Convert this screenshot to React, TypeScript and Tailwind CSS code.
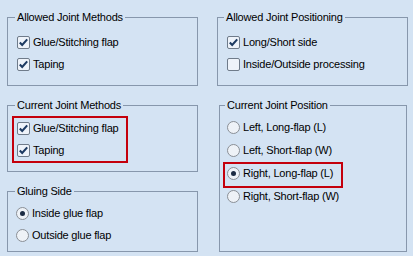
import React from "react";

type GroupProps = {
  title: string;
  className?: string;
  bodyClass?: string;
  legendClass?: string;
  children: React.ReactNode;
};

const GroupBox = ({ title, className = "", bodyClass = "", legendClass = "ml-[7px]", children }: GroupProps) => {
  return (
    <fieldset className={`border border-[#8797ac] ${className}`}>
      <legend className={`px-[2px] leading-[14px] ${legendClass}`}>{title}</legend>
      <div className={bodyClass}>{children}</div>
    </fieldset>
  );
};

const CheckBox = ({ checked }: { checked: boolean }) => {
  return (
    <span className="flex h-[13px] w-[13px] shrink-0 items-center justify-center rounded-[2px] border border-[#6f7b8a] bg-[#eef3fa]">
      {checked && (
        <svg width="11" height="11" viewBox="0 0 11 11">
          <path d="M1.8 5.4 L4.2 7.9 L9.2 2.4" fill="none" stroke="#1d3a62" strokeWidth="2.1" />
        </svg>
      )}
    </span>
  );
};

const Radio = ({ checked }: { checked: boolean }) => {
  return (
    <span className="flex h-[13px] w-[13px] shrink-0 items-center justify-center rounded-full border border-[#8a8f96] bg-[#eef2f7]">
      {checked && <span className="h-[5px] w-[5px] rounded-full bg-[#1c2c44]" />}
    </span>
  );
};

const CheckRow = ({ label, checked = true, h = "h-[22px]" }: { label: string; checked?: boolean; h?: string }) => {
  return (
    <div className={`flex items-center gap-[3px] ${h}`}>
      <CheckBox checked={checked} />
      <span>{label}</span>
    </div>
  );
};

const RadioRow = ({ label, checked = false, h = "h-[22px]" }: { label: string; checked?: boolean; h?: string }) => {
  return (
    <div className={`flex items-center gap-[3px] ${h}`}>
      <Radio checked={checked} />
      <span>{label}</span>
    </div>
  );
};

export default function App() {
  return (
    <div
      className="flex h-[256px] w-[413px] gap-[19px] bg-[#d4e3f3] pl-[7px] pt-[10px] text-[11px] tracking-[-0.2px] text-black"
      style={{ fontFamily: '"Liberation Sans", Arial, sans-serif' }}
    >
      {/* left column */}
      <div className="flex w-[191px] flex-col">
        <GroupBox title="Allowed Joint Methods" bodyClass="pl-[9px] pt-[7px] pb-[10px]">
          <CheckRow label="Glue/Stitching flap" />
          <CheckRow label="Taping" />
        </GroupBox>

        <GroupBox title="Current Joint Methods" className="mt-[12px]" bodyClass="pl-[4px] pt-[4px] pb-[8px]">
          <div className="flex w-[116px] flex-col gap-[1px] border-2 border-[#c4000c] pl-[3px]">
            <CheckRow label="Glue/Stitching flap" h="h-[21px]" />
            <CheckRow label="Taping" h="h-[21px]" />
          </div>
        </GroupBox>

        <GroupBox title="Gluing Side" className="mt-[12px]" bodyClass="pl-[8px] pt-[4px] pb-[5px]">
          <RadioRow label="Inside glue flap" checked />
          <RadioRow label="Outside glue flap" />
        </GroupBox>
      </div>

      {/* right column */}
      <div className="flex w-[191px] flex-col">
        <GroupBox
          title="Allowed Joint Positioning"
          legendClass="ml-[6px]"
          bodyClass="pl-[9px] pt-[7px] pb-[10px]"
        >
          <CheckRow label="Long/Short side" />
          <CheckRow label="Inside/Outside processing" checked={false} />
        </GroupBox>

        <GroupBox
          title="Current Joint Position"
          legendClass="ml-[5px]"
          className="ml-[2px] mt-[12px] w-[188px]"
          bodyClass="pl-[7px] pt-[4px] pb-[43px]"
        >
          <RadioRow label="Left, Long-flap (L)" h="h-[23px]" />
          <RadioRow label="Left, Short-flap (W)" h="h-[23px]" />
          <div className="relative">
            <RadioRow label="Right, Long-flap (L)" checked h="h-[23px]" />
            <span className="pointer-events-none absolute -left-[4px] top-0 -bottom-[3px] w-[120px] border-2 border-[#c4000c]" />
          </div>
          <RadioRow label="Right, Short-flap (W)" h="h-[23px]" />
        </GroupBox>
      </div>
    </div>
  );
}
